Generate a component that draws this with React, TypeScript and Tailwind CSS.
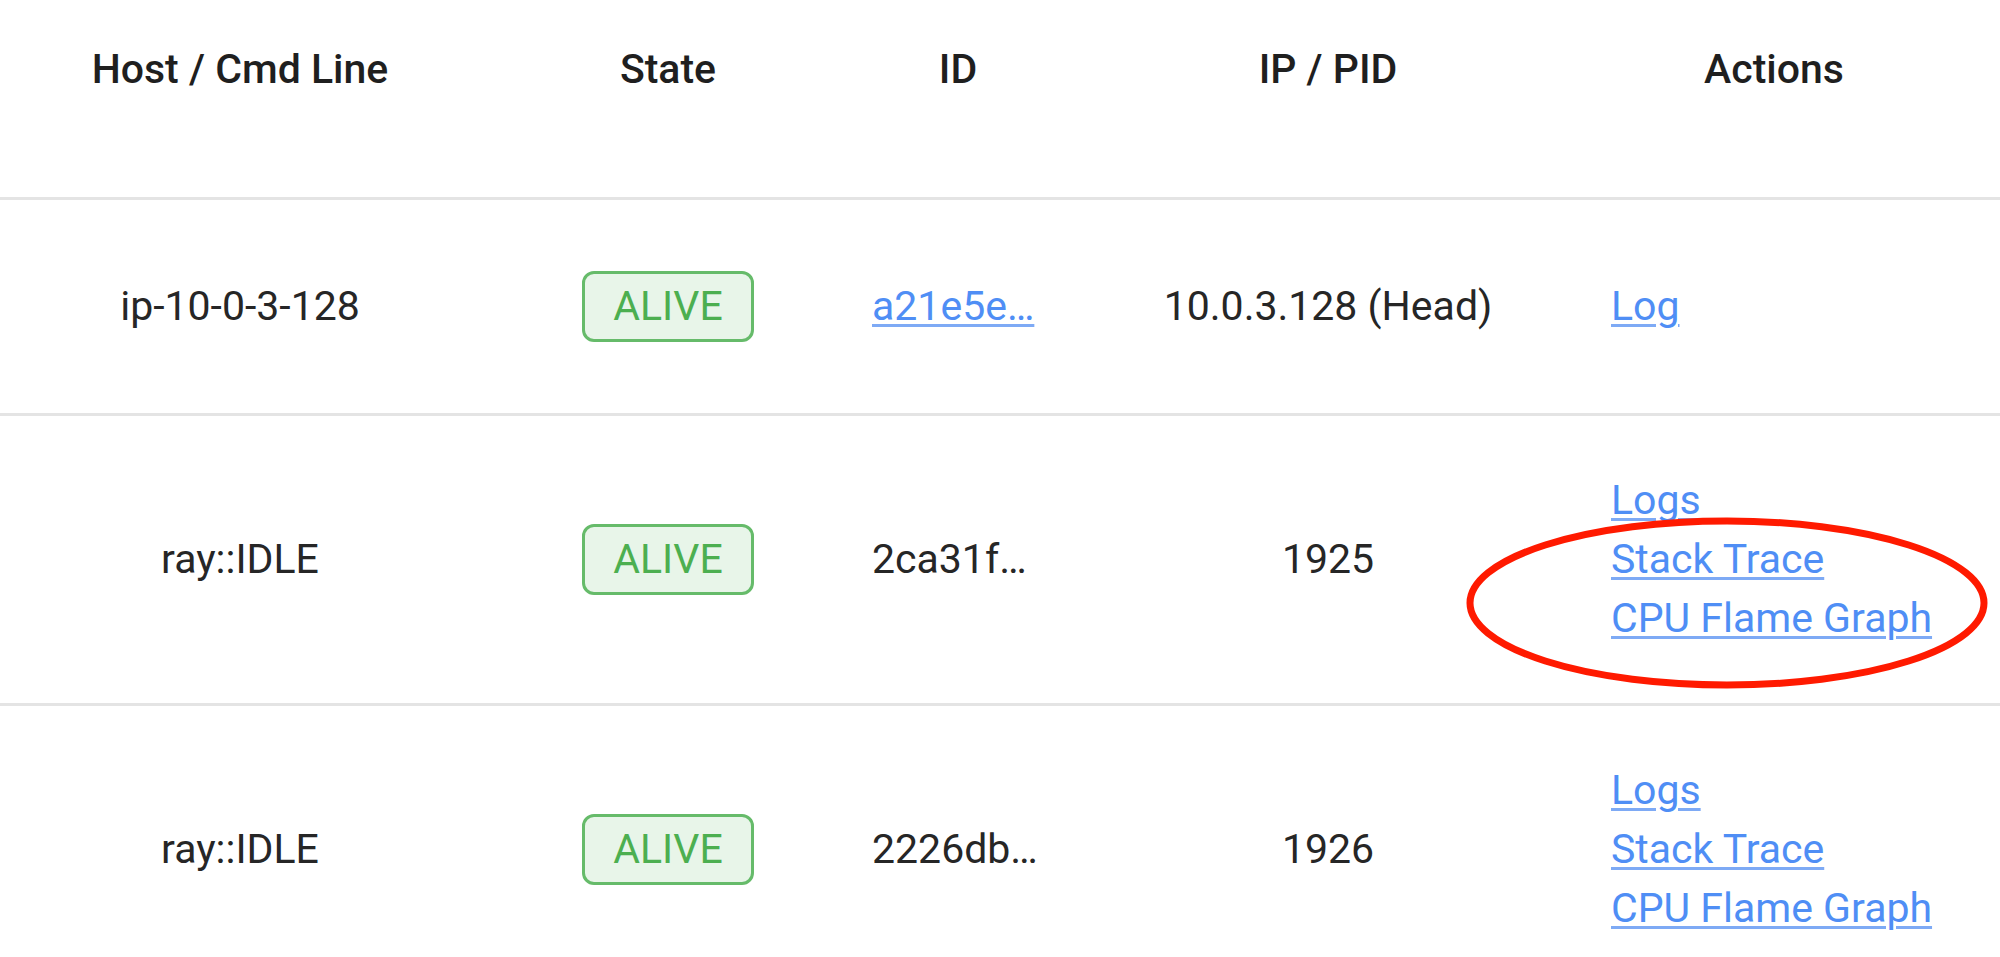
import React from "react";

const cols = "grid grid-cols-[480px_376px_204px_536px_356px_48px]";

function Badge() {
  return (
    <span className="inline-flex h-[71px] w-[172px] items-center justify-center rounded-[12px] border-[3px] border-[#66bb6a] bg-[#e8f5e9] text-[41px] leading-none text-[#4caf50]">
      ALIVE
    </span>
  );
}

function A({ children }: { children: React.ReactNode }) {
  return (
    <a
      href="#"
      className="text-[#4f8ef5] underline decoration-[#7eaaf5] decoration-[3px] underline-offset-[4px]"
    >
      {children}
    </a>
  );
}

type Row = {
  host: string;
  id: string;
  idLink?: boolean;
  ip: string;
  actions: string[];
};

const rows: Row[] = [
  { host: "ip-10-0-3-128", id: "a21e5e…", idLink: true, ip: "10.0.3.128 (Head)", actions: ["Log"] },
  { host: "ray::IDLE", id: "2ca31f…", ip: "1925", actions: ["Logs", "Stack Trace", "CPU Flame Graph"] },
  { host: "ray::IDLE", id: "2226db…", ip: "1926", actions: ["Logs", "Stack Trace", "CPU Flame Graph"] },
];

export default function App() {
  return (
    <div className="relative h-[957px] w-[2000px] overflow-hidden bg-white text-[41px] leading-[59px] text-[#262626] [font-family:Roboto,sans-serif]">
      {/* header */}
      <div className={`${cols} h-[200px] border-b-[3px] border-[#e4e4e4] pt-[40px] font-medium text-[#1f1f1f]`}>
        <div className="text-center">Host / Cmd Line</div>
        <div className="text-center">State</div>
        <div className="text-center">ID</div>
        <div className="text-center">IP / PID</div>
        <div className="text-center">Actions</div>
        <div />
      </div>

      {rows.map((r, i) => (
        <div
          key={i}
          className={`${cols} items-center border-b-[3px] border-[#e4e4e4] ${i === 0 ? "h-[216px]" : "py-[55px]"}`}
        >
          <div className="text-center">{r.host}</div>
          <div className="flex justify-center">
            <Badge />
          </div>
          <div className="pl-[16px] whitespace-nowrap">
            {r.idLink ? <A>{r.id}</A> : <span>{r.id}</span>}
          </div>
          <div className="text-center whitespace-nowrap">{r.ip}</div>
          <div className="flex flex-col items-start pl-[15px] whitespace-nowrap">
            {r.actions.map((a) => (
              <A key={a}>{a}</A>
            ))}
          </div>
          <div />
        </div>
      ))}

      {/* red annotation ellipse */}
      <svg
        className="pointer-events-none absolute left-[1460px] top-[510px]"
        width="535"
        height="186"
        viewBox="0 0 535 186"
      >
        <ellipse cx="267" cy="93" rx="257" ry="82" fill="none" stroke="#ff1a00" strokeWidth="7" />
      </svg>
    </div>
  );
}
